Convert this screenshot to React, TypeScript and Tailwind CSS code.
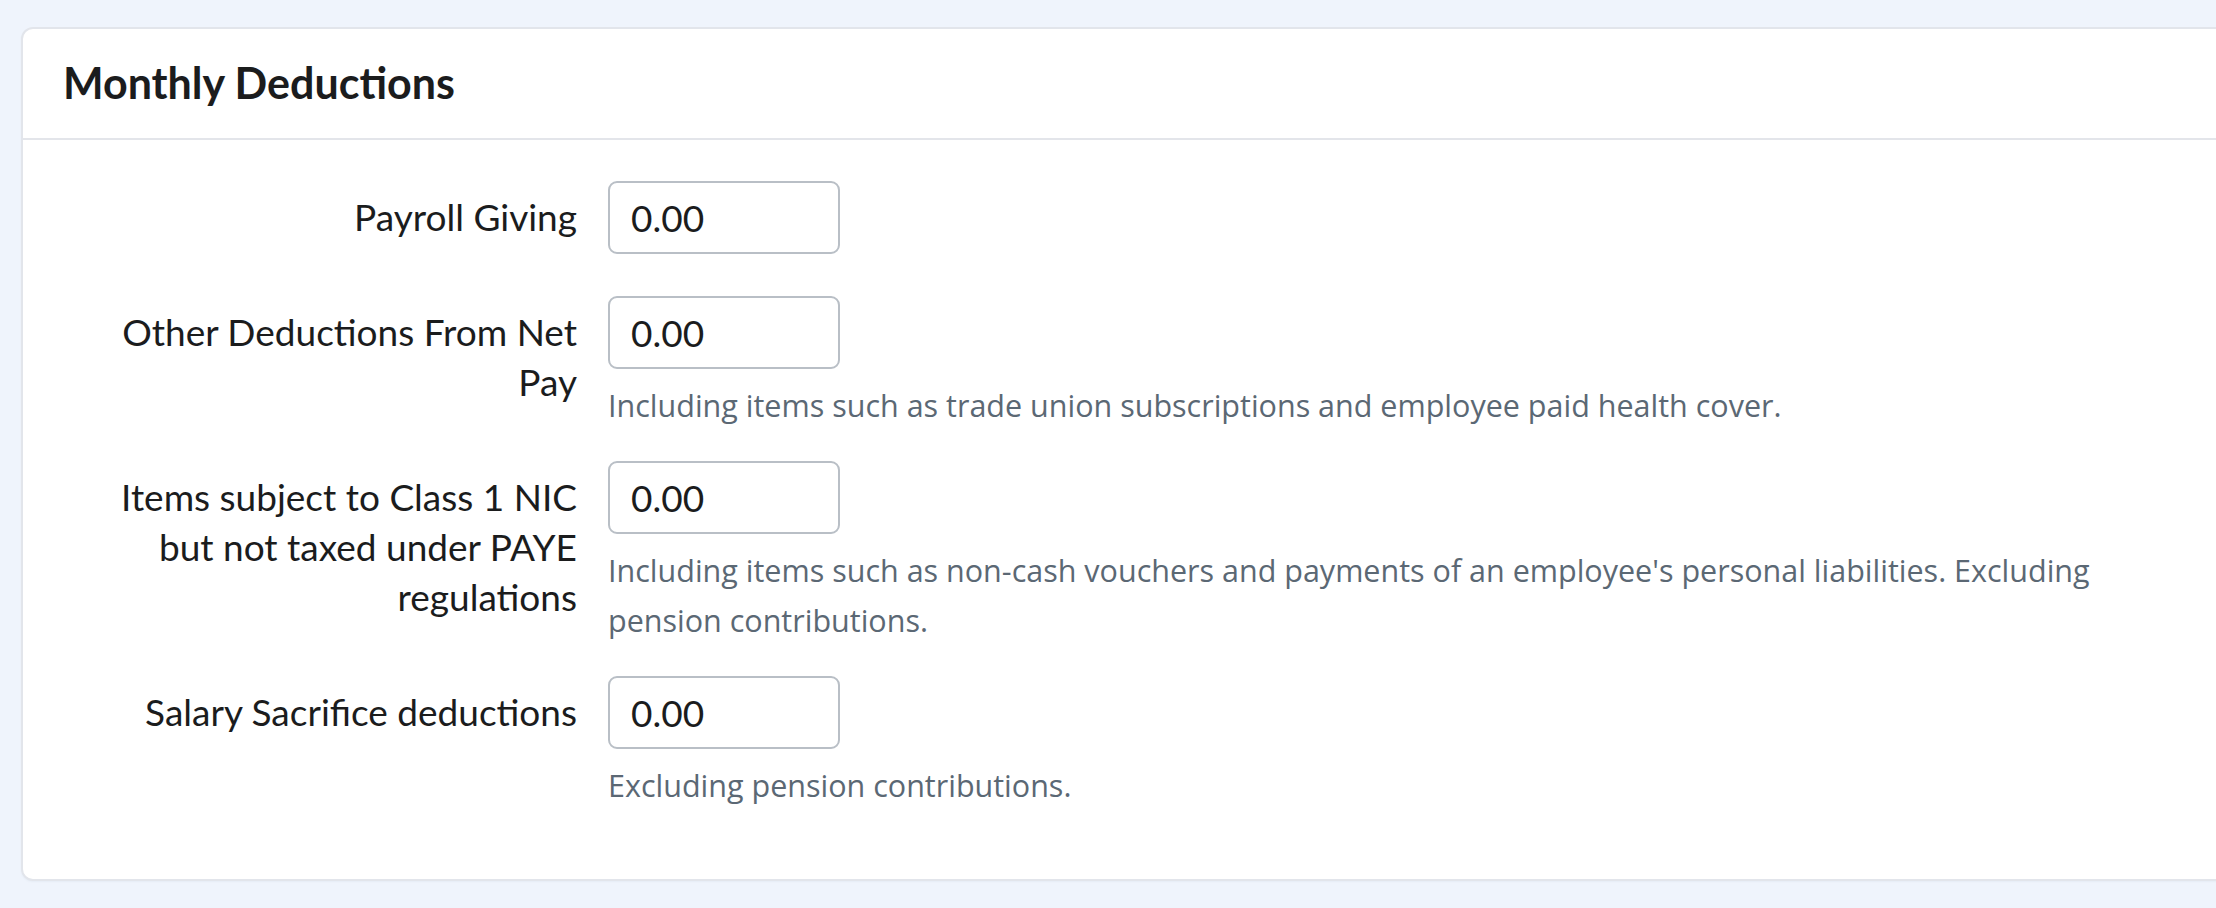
import React from 'react'

interface DeductionField {
  id: string
  label: string
  value: string
  help?: string
}

const fields: DeductionField[] = [
  { id: 'payroll-giving', label: 'Payroll Giving', value: '0.00' },
  {
    id: 'other-deductions',
    label: 'Other Deductions From Net Pay',
    value: '0.00',
    help: 'Including items such as trade union subscriptions and employee paid health cover.',
  },
  {
    id: 'class1-nic',
    label: 'Items subject to Class 1 NIC but not taxed under PAYE regulations',
    value: '0.00',
    help: "Including items such as non-cash vouchers and payments of an employee's personal liabilities. Excluding pension contributions.",
  },
  {
    id: 'salary-sacrifice',
    label: 'Salary Sacrifice deductions',
    value: '0.00',
    help: 'Excluding pension contributions.',
  },
]

const FieldRow = ({ field }: { field: DeductionField }) => {
  return (
    <div className="flex">
      <label
        htmlFor={field.id}
        className="w-[585px] shrink-0 pl-[92px] pr-[31px] pt-[11px] text-right text-[37px] leading-[50px] text-[#1b1c1d]"
      >
        {field.label}
      </label>
      <div className="flex-1">
        <input
          id={field.id}
          defaultValue={field.value}
          className="block h-[73px] w-[232px] rounded-[9px] border-2 border-[#b9bfc6] bg-white px-[21px] text-[37px] text-[#1b1c1d] outline-none"
        />
        <p
          className="mt-[11px] max-w-[1560px] text-[30.5px] leading-[50px] text-[#5b6874]"
          style={{ fontFamily: '"Open Sans", Lato, sans-serif' }}
        >
          {field.help}
        </p>
      </div>
    </div>
  )
}

export default function App() {
  return (
    <div
      className="min-h-screen overflow-hidden bg-[#eff4fc] pl-[21px] pt-[27px]"
      style={{ fontFamily: 'Lato, "Noto Sans", sans-serif' }}
    >
      <div className="w-[2260px] rounded-[12px] border-2 border-[#e2e5eb] bg-white shadow-[0_1px_2px_rgba(30,40,80,0.04)]">
        {/* header */}
        <div className="flex h-[111px] items-center border-b-2 border-[#e3e5ea] px-[40px]">
          <h2 className="text-[43px] font-bold text-[#1b1c1d]">Monthly Deductions</h2>
        </div>

        {/* fields */}
        <div className="flex flex-col gap-[31px] pb-[69px] pt-[41px]">
          {fields.map((field) => (
            <FieldRow key={field.id} field={field} />
          ))}
        </div>
      </div>
    </div>
  )
}
